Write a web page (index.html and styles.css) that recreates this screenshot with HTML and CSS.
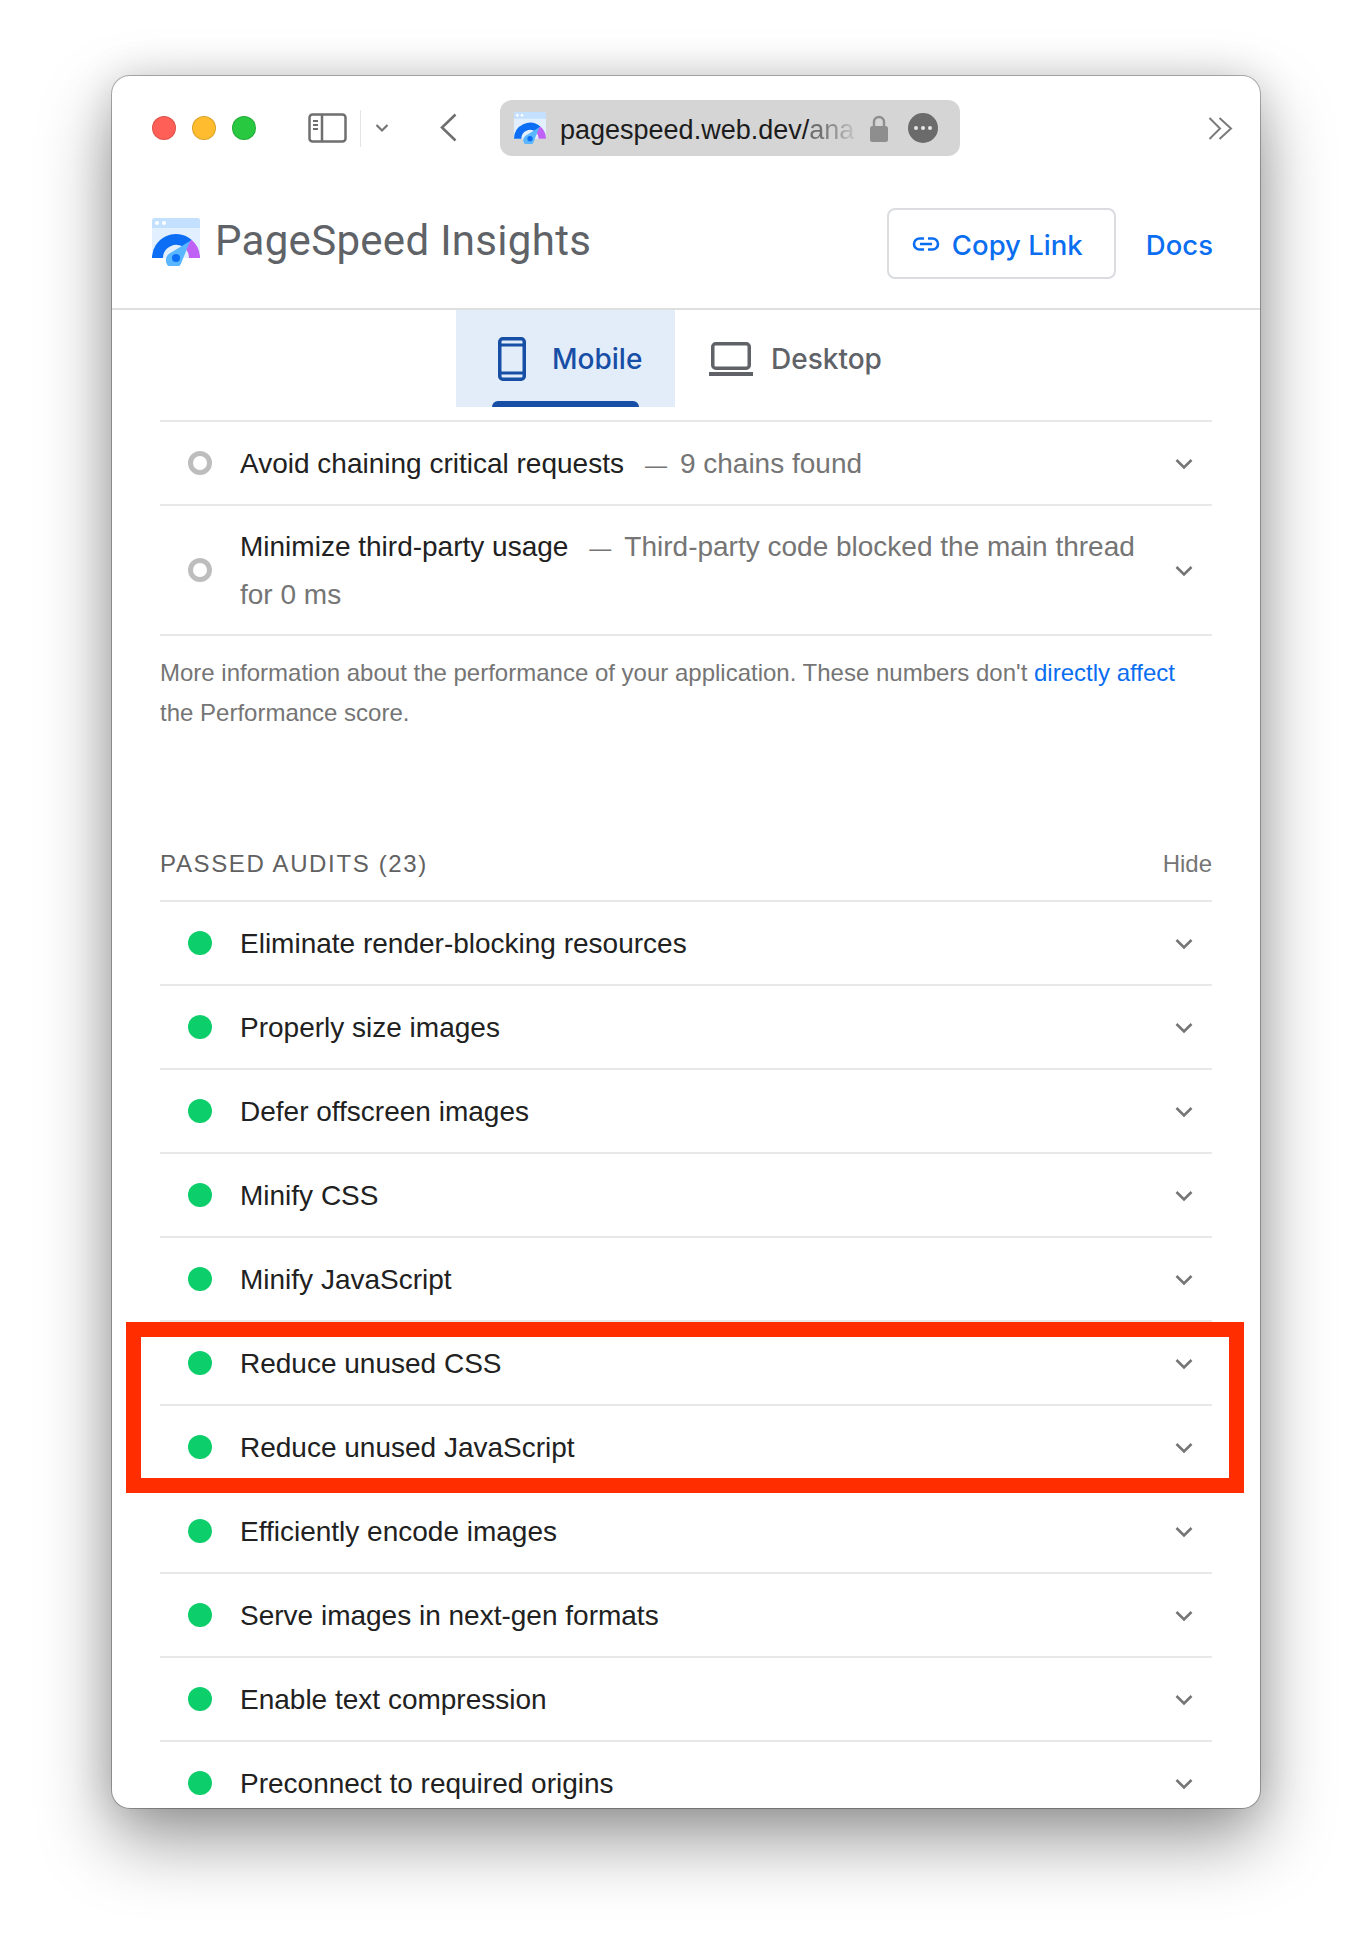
FILE: index.html
```html
<!DOCTYPE html>
<html lang="en">
<head>
  <meta charset="UTF-8">
  <meta name="viewport" content="width=device-width, initial-scale=1.0">
  <title>PageSpeed Insights</title>
  <link rel="stylesheet" href="styles.css">
</head>
<body>
  <svg class="defs" width="0" height="0" aria-hidden="true">
    <symbol id="psi-logo" viewBox="0 0 48 48">
      <path d="M0 3a3 3 0 0 1 3-3h42a3 3 0 0 1 3 3v37H0z" fill="#e1effe"/>
      <path d="M0 3a3 3 0 0 1 3-3h42a3 3 0 0 1 3 3v7H0z" fill="#c3e0ff"/>
      <circle cx="5" cy="5" r="2" fill="#fff"/>
      <circle cx="12" cy="5" r="2" fill="#fff"/>
      <path d="M0 40a24 24 0 0 1 39.5-18.3l-7 8.4A13 13 0 0 0 11 40z" fill="#0b6ef5"/>
      <path d="M39.5 21.700a24 24 0 0 1 8.500 18.300H37a13 13 0 0 0-4.500-9.900z" fill="#c061f5"/>
      <path d="M17.500 35.500L38 23 29.500 44.500A8 8 0 1 1 17.500 35.500z" fill="#5ab7ff"/>
      <circle cx="24" cy="40" r="4" fill="#0b6ef5"/>
    </symbol>
    <symbol id="chev" viewBox="0 0 18 12">
      <path d="M1.500 2l7.500 7.500L16.500 2" fill="none" stroke="#757575" stroke-width="2.600"/>
    </symbol>
  </svg>

  <div class="window">
    <div class="toolbar">
      <span class="light red"></span>
      <span class="light yellow"></span>
      <span class="light green"></span>

      <svg class="sidebar-icon" width="39" height="30" viewBox="0 0 39 30">
        <rect x="1.500" y="1.500" width="36" height="27" rx="3" fill="none" stroke="#6f6f6f" stroke-width="2.500"/>
        <path d="M14 2v26" stroke="#6f6f6f" stroke-width="2.500"/>
        <path d="M5 8h5M5 12h5M5 16h5" stroke="#6f6f6f" stroke-width="2"/>
      </svg>
      <span class="tool-sep"></span>
      <svg class="small-chev" width="14" height="10" viewBox="0 0 14 10">
        <path d="M1.500 2l5.500 5.500L12.500 2" fill="none" stroke="#757575" stroke-width="2.200"/>
      </svg>
      <svg class="back" width="17" height="29" viewBox="0 0 17 29">
        <path d="M15.500 1.500L2 14.500l13.500 13" fill="none" stroke="#6f6f6f" stroke-width="2.600"/>
      </svg>

      <div class="urlbar">
        <svg class="favicon" width="32" height="32"><use href="#psi-logo"/></svg>
        <span class="url">pagespeed.web.dev/<span class="url-rest">ana</span></span>
        <svg class="lock" width="18" height="27" viewBox="0 0 18 27">
          <path d="M4 12V7a5 5 0 0 1 10 0v5" fill="none" stroke="#8e8e8e" stroke-width="2.400"/>
          <rect y="11" width="18" height="16" rx="2.500" fill="#8e8e8e"/>
        </svg>
        <span class="more"><i></i><i></i><i></i></span>
      </div>

      <svg class="forward" width="25" height="23" viewBox="0 0 25 23">
        <path d="M1.500 1l10.500 10.500L1.500 22M11.500 1L23 11.500 11.500 22" fill="none" stroke="#7a7a7a" stroke-width="2"/>
      </svg>
    </div>

    <header class="site-header">
      <svg class="logo" width="48" height="48"><use href="#psi-logo"/></svg>
      <span class="site-title">PageSpeed Insights</span>
      <a class="copy-btn">
        <svg width="28" height="14" viewBox="0 0 28 14">
          <path d="M12 1.500H7.500a5.500 5.500 0 0 0 0 11H12M16 1.500h4.500a5.500 5.500 0 0 1 0 11H16M8 7h12" fill="none" stroke="#0b6ef0" stroke-width="2.600"/>
        </svg>
        Copy Link
      </a>
      <a class="docs">Docs</a>
    </header>

    <nav class="tabs">
      <div class="tab active">
        <svg width="28" height="44" viewBox="0 0 28 44">
          <rect x="1.750" y="1.750" width="24.500" height="40.500" rx="3" fill="none" stroke="#174ea6" stroke-width="3.500"/>
          <path d="M2 8h24M2 36h24" stroke="#174ea6" stroke-width="3"/>
        </svg>
        Mobile
      </div>
      <div class="tab">
        <svg width="44" height="34" viewBox="0 0 44 34">
          <rect x="3.750" y="1.750" width="36.500" height="24.500" rx="3" fill="none" stroke="#5f6368" stroke-width="3.500"/>
          <path d="M0 32h44" stroke="#5f6368" stroke-width="4"/>
        </svg>
        Desktop
      </div>
    </nav>

    <div class="report">
      <div class="audit">
        <span class="dot ring"></span>
        <div class="audit-text">Avoid chaining critical requests<span class="dash">—</span><span class="muted">9 chains found</span></div>
        <svg class="chevron"><use href="#chev"/></svg>
      </div>
      <div class="audit tall">
        <span class="dot ring"></span>
        <div class="audit-text">Minimize third-party usage<span class="dash">—</span><span class="muted">Third-party code blocked the main thread</span><br><span class="muted">for 0 ms</span></div>
        <svg class="chevron"><use href="#chev"/></svg>
      </div>

      <p class="note">More information about the performance of your application. These numbers don't <a>directly affect</a> the Performance score.</p>

      <div class="passed-head">
        <span class="passed-title">PASSED AUDITS <span class="count">(23)</span></span>
        <span class="hide">Hide</span>
      </div>

      <div class="audit"><span class="dot"></span><div class="audit-text">Eliminate render-blocking resources</div><svg class="chevron"><use href="#chev"/></svg></div>
      <div class="audit"><span class="dot"></span><div class="audit-text">Properly size images</div><svg class="chevron"><use href="#chev"/></svg></div>
      <div class="audit"><span class="dot"></span><div class="audit-text">Defer offscreen images</div><svg class="chevron"><use href="#chev"/></svg></div>
      <div class="audit"><span class="dot"></span><div class="audit-text">Minify CSS</div><svg class="chevron"><use href="#chev"/></svg></div>
      <div class="audit"><span class="dot"></span><div class="audit-text">Minify JavaScript</div><svg class="chevron"><use href="#chev"/></svg></div>
      <div class="audit"><span class="dot"></span><div class="audit-text">Reduce unused CSS</div><svg class="chevron"><use href="#chev"/></svg></div>
      <div class="audit"><span class="dot"></span><div class="audit-text">Reduce unused JavaScript</div><svg class="chevron"><use href="#chev"/></svg></div>
      <div class="audit"><span class="dot"></span><div class="audit-text">Efficiently encode images</div><svg class="chevron"><use href="#chev"/></svg></div>
      <div class="audit"><span class="dot"></span><div class="audit-text">Serve images in next-gen formats</div><svg class="chevron"><use href="#chev"/></svg></div>
      <div class="audit"><span class="dot"></span><div class="audit-text">Enable text compression</div><svg class="chevron"><use href="#chev"/></svg></div>
      <div class="audit"><span class="dot"></span><div class="audit-text">Preconnect to required origins</div><svg class="chevron"><use href="#chev"/></svg></div>
    </div>
  </div>

  <div class="highlight"></div>
</body>
</html>
```

FILE: styles.css
```css
html, body {
  margin: 0;
  padding: 0;
  background-color: #ffffff;
}

body {
  position: relative;
  width: 1372px;
  height: 1956px;
  overflow: hidden;
  padding-top: 76px;
  box-sizing: border-box;
  font-family: 'Liberation Sans', Arial, sans-serif;
  color: #212121;
}

.defs {
  position: absolute;
}

.window {
  width: 1148px;
  height: 1732px;
  margin-left: 112px;
  background-color: #ffffff;
  border-radius: 18px;
  overflow: hidden;
  box-shadow: 0 0 0 1px rgba(0, 0, 0, 0.28), 0 32px 72px rgba(0, 0, 0, 0.4), 0 0 40px rgba(0, 0, 0, 0.14);
}

/* browser toolbar */
.toolbar {
  display: flex;
  align-items: center;
  padding: 24px 27px 0 40px;
  height: 56px;
}

.light {
  width: 24px;
  height: 24px;
  border-radius: 50%;
  margin-right: 16px;
  box-sizing: border-box;
  border: 1px solid rgba(0, 0, 0, 0.14);
}

.red { background-color: #ff5f57; }
.yellow { background-color: #febc2e; }
.green { background-color: #28c840; }

.sidebar-icon {
  margin-left: 36px;
}

.tool-sep {
  width: 1px;
  height: 37px;
  margin-left: 13px;
  background-color: #e4e4e4;
}

.small-chev {
  margin-left: 14px;
}

.back {
  margin-left: 51px;
  margin-top: -2px;
}

.urlbar {
  display: flex;
  align-items: center;
  width: 460px;
  height: 56px;
  margin-left: 43px;
  box-sizing: border-box;
  padding-left: 14px;
  background-color: #d5d5d5;
  border-radius: 12px;
}

.url {
  width: 292px;
  margin-left: 14px;
  margin-top: 5px;
  font-size: 27px;
  white-space: nowrap;
  color: #1c1c1c;
}

.url-rest {
  background: linear-gradient(90deg, #6e6e6e 25%, #c4c4c4 100%);
  -webkit-background-clip: text;
  background-clip: text;
  color: transparent;
}

.lock {
  margin-left: 18px;
}

.more {
  display: flex;
  align-items: center;
  justify-content: center;
  gap: 3px;
  width: 30px;
  height: 30px;
  margin-left: 20px;
  border-radius: 50%;
  background-color: #6b6b6b;
}

.more i {
  width: 4px;
  height: 4px;
  border-radius: 50%;
  background-color: #e6e6e6;
}

.forward {
  margin-left: auto;
}

/* site header */
.site-header {
  display: flex;
  align-items: center;
  height: 71px;
  padding: 52px 47px 29px 40px;
  border-bottom: 2px solid #dfdfdf;
}

.logo {
  margin-right: 15px;
  margin-top: -3px;
}

.site-title {
  font-family: Roboto, sans-serif;
  font-size: 42px;
  letter-spacing: 0.300px;
  color: #5f6368;
  margin-top: -6px;
}

.copy-btn {
  display: flex;
  align-items: center;
  gap: 12px;
  box-sizing: border-box;
  width: 229px;
  height: 71px;
  margin-left: auto;
  padding: 2px 0 0 23px;
  border: 2px solid #dadce0;
  border-radius: 8px;
  font-family: Inter, Roboto, sans-serif;
  font-size: 27.500px;
  font-weight: 500;
  color: #0b6ef0;
}

.copy-btn svg {
  margin-top: -2px;
}

.docs {
  margin-left: 30px;
  padding-top: 2px;
  font-family: Inter, Roboto, sans-serif;
  font-size: 27.500px;
  font-weight: 500;
  color: #0b6ef0;
}

/* tabs */
.tabs {
  display: flex;
  height: 97px;
  padding-left: 344px;
}

.tab {
  display: flex;
  align-items: center;
  gap: 18px;
  margin-left: 34px;
  font-family: Inter, Roboto, sans-serif;
  font-size: 28px;
  font-weight: 500;
  color: #5f6368;
}

.tab.active {
  position: relative;
  box-sizing: border-box;
  width: 219px;
  margin-left: 0;
  padding-left: 42px;
  gap: 26px;
  background-color: #e3edfa;
  color: #174ea6;
}

.tab.active::after {
  content: "";
  position: absolute;
  left: 36px;
  bottom: 0;
  width: 147px;
  height: 6px;
  background-color: #174ea6;
  border-radius: 6px 6px 0 0;
}

/* audit rows */
.report {
  margin: 13px 48px 0 48px;
}

.audit {
  display: flex;
  align-items: center;
  box-sizing: border-box;
  height: 84px;
  padding: 0 19px 0 28px;
  border-top: 2px solid #e8e8e8;
}

.audit.tall {
  height: 132px;
  border-bottom: 2px solid #e8e8e8;
}

.dot {
  flex: none;
  box-sizing: border-box;
  width: 24px;
  height: 24px;
  margin-top: -1px;
  border-radius: 50%;
  background-color: #0cce6b;
}

.dot.ring {
  background-color: transparent;
  border: 5px solid #bdbdbd;
}

.audit-text {
  flex: 1;
  margin-left: 28px;
  padding-top: 2px;
  padding-right: 30px;
  font-size: 28px;
  line-height: 48px;
}

.muted {
  color: #757575;
}

.dash {
  margin: 0 13px 0 21px;
  font-size: 22px;
  line-height: 1;
  color: #757575;
}

.chevron {
  flex: none;
  width: 18px;
  height: 12px;
  margin-top: 2px;
}

.note {
  margin: 17px 0 0;
  font-size: 24px;
  line-height: 40px;
  color: #757575;
}

.note a {
  color: #0b6ef0;
}

.passed-head {
  display: flex;
  justify-content: space-between;
  align-items: center;
  height: 40px;
  margin-top: 111px;
  padding-bottom: 16px;
  font-size: 24px;
  color: #616161;
}

.passed-title {
  letter-spacing: 1.650px;
}

.hide {
  color: #757575;
}

/* red annotation drawn over the screenshot */
.highlight {
  position: absolute;
  left: 126px;
  top: 1322px;
  width: 1118px;
  height: 171px;
  box-sizing: border-box;
  border: 15px solid #ff2d00;
}
```
